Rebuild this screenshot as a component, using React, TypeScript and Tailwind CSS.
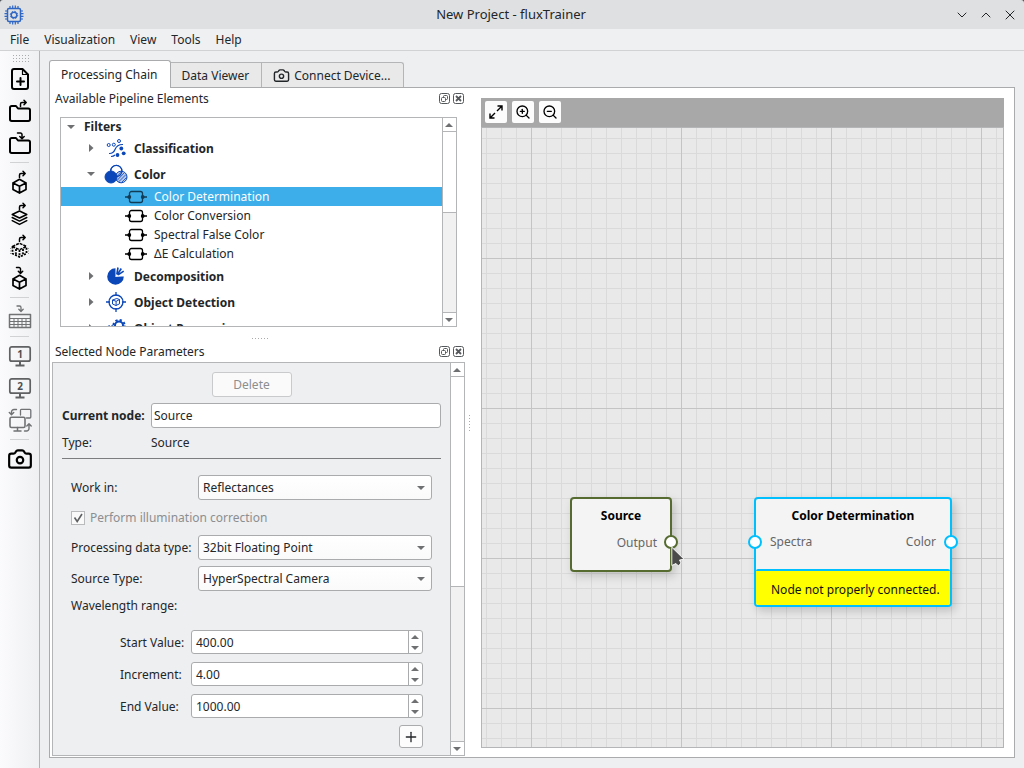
import { useState, type ReactNode } from "react";
import { Camera, ChevronDown, ChevronUp, Plus, X, ZoomIn, ZoomOut } from "lucide-react";

/* ---------- small shared parts ---------- */

const Dots = ({ cols, rows }: { cols: number; rows: number }) => (
  <svg width={cols * 3} height={rows * 3} fill="#a9abad" aria-hidden="true">
    {Array.from({ length: cols * rows }, (_, i) => (
      <rect key={i} x={(i % cols) * 3 + 1} y={Math.floor(i / cols) * 3 + 1} width="1" height="1" />
    ))}
  </svg>
);

const Triangle = ({ dir }: { dir: "up" | "down" | "right" }) => {
  if (dir === "right") {
    return (
      <svg width="5" height="8" viewBox="0 0 5 8" fill="#6e7072" aria-hidden="true">
        <path d="M0 0l4.5 4L0 8z" />
      </svg>
    );
  }
  return (
    <svg width="8" height="4" viewBox="0 0 8 4" fill="#6e7072" aria-hidden="true">
      <path d={dir === "up" ? "M0 4l4-4 4 4z" : "M0 0l4 4 4-4z"} />
    </svg>
  );
};

const ScrollBar = ({ thumb }: { thumb: string }) => (
  <div className="flex w-[14px] shrink-0 flex-col border-l border-[#b4b5b6] bg-[#f1f1f1]">
    <button aria-label="Scroll up" className="flex h-[14px] shrink-0 items-center justify-center border-b border-[#b4b5b6] bg-white pr-px">
      <Triangle dir="up" />
    </button>
    <div className="min-h-0 flex-1">
      <div className={`border-b border-[#b4b5b6] bg-white ${thumb}`} />
    </div>
    <button aria-label="Scroll down" className="flex h-[14px] shrink-0 items-center justify-center border-t border-[#b4b5b6] bg-white pr-px">
      <Triangle dir="down" />
    </button>
  </div>
);

const DockTitle = ({ title }: { title: string }) => (
  <div className="flex h-5 shrink-0 items-center pr-px pl-[5px]">
    <h2 className="flex-1">{title}</h2>
    <div className="flex gap-[3px]">
      <button aria-label={`Float ${title}`}>
        <svg width="11" height="11" viewBox="0 0 11 11" fill="none" stroke="#55585a">
          <rect x="0.5" y="0.5" width="10" height="10" rx="2" />
          <rect x="4.5" y="2.5" width="4" height="4" rx="1" />
          <rect x="2.5" y="4.5" width="4" height="4" rx="1" fill="#fff" />
        </svg>
      </button>
      <button aria-label={`Close ${title}`}>
        <svg width="11" height="11" viewBox="0 0 11 11" fill="none" stroke="#55585a">
          <rect x="0.5" y="0.5" width="10" height="10" rx="2" />
          <path d="M3 3l5 5M8 3L3 8" strokeWidth="1.8" />
        </svg>
      </button>
    </div>
  </div>
);

/* ---------- icons ---------- */

const ChipIcon = () => (
  <svg width="20" height="20" viewBox="0 0 20 20" fill="none" stroke="#2f66c4" aria-hidden="true">
    <rect x="3.5" y="3.5" width="13" height="13" rx="1.5" strokeWidth="1.5" />
    <circle cx="10" cy="10" r="2.8" strokeWidth="1.4" />
    <circle cx="10" cy="10" r="3.7" strokeWidth="1" strokeDasharray="1.45 1.45" />
    <path
      d="M6 1v2.5M8.7 .5v3M11.3 .5v3M14 1v2.5M6 16.5v2.5M8.7 16.5v3M11.3 16.5v3M14 16.5v2.5M1 6h2.5M.5 8.7h3M.5 11.3h3M1 14h2.5M16.5 6h2.5M16.5 8.7h3M16.5 11.3h3M16.5 14h2.5"
      strokeWidth="1.2"
    />
  </svg>
);

const ToolIcon = ({ children, color = "#000" }: { children: ReactNode; color?: string }) => (
  <svg
    width="24"
    height="24"
    viewBox="0 0 24 24"
    fill="none"
    stroke={color}
    strokeWidth="2"
    strokeLinecap="round"
    strokeLinejoin="round"
    aria-hidden="true"
  >
    {children}
  </svg>
);

const ArrowOut = () => <path d="M11.5 7.5V5A1.5 1.5 0 0 1 13 3.5h4M15 1.3l2.2 2.2L15 5.7" strokeWidth="1.5" />;
const ArrowIn = () => <path d="M8.5 1.5H11A1.5 1.5 0 0 1 12.5 3v4M10.3 5.3l2.2 2.2 2.2-2.2" strokeWidth="1.5" />;
const Cube = () => (
  <path d="M11.5 9.3l6.5 3.6v6.6l-6.5 3.6L5 19.500v-6.600zM5 12.900l6.500 3.400 6.500-3.400M11.500 16.300v6.800" strokeWidth="1.7" />
);
const Folder = () => (
  <path d="M2 20.300V8.700A1.700 1.700 0 0 1 3.700 7H8l2 2.500h10.300A1.700 1.700 0 0 1 22 11.200v9.100a1.700 1.700 0 0 1-1.700 1.700H3.700A1.700 1.700 0 0 1 2 20.300z" />
);

const Monitor = ({ label }: { label: string }) => (
  <ToolIcon color="#5f6163">
    <rect x="1.8" y="2.8" width="20.4" height="14.4" rx="2" strokeWidth="1.7" />
    <path d="M12 17.5V21M7.500 21.500h9" strokeLinecap="butt" />
    <text x="12" y="14" textAnchor="middle" fill="#4d4f51" stroke="none" fontSize="10" fontWeight="700">
      {label}
    </text>
  </ToolIcon>
);

const NodeIcon = ({ active }: { active?: boolean }) => (
  <svg width="22" height="14" viewBox="0 0 22 14" fill="none" stroke={active ? "#123c56" : "#000"} aria-hidden="true">
    <rect x="4.5" y="1.5" width="13" height="11" rx="2" strokeWidth="1.3" />
    <path d="M0 7h4M18 7h4" strokeWidth="1.5" />
    <g fill={active ? "#123c56" : "#000"} stroke="none">
      <circle cx="4.300" cy="7" r="1.900" />
      <circle cx="17.700" cy="7" r="1.900" />
    </g>
  </svg>
);

const blue = "#0b47b8";

const ClassificationIcon = () => (
  <svg width="20" height="20" viewBox="0 0 20 20" fill="none" stroke={blue} aria-hidden="true">
    <circle cx="2.7" cy="7" r="1.5" />
    <circle cx="7.8" cy="6.7" r="1.5" />
    <circle cx="13" cy="3" r="1.5" />
    <path d="M3 15.5c4 .2 5-1.500 6-4S12 6.300 17 6.500M5 18.500c1.500 0 3-.5 4-1.500" strokeWidth="1.2" />
    <g fill={blue} stroke="none">
      <circle cx="15.3" cy="10.5" r="1.9" />
      <circle cx="11.5" cy="17" r="1.9" />
      <circle cx="17.7" cy="15.3" r="1.9" />
    </g>
  </svg>
);

const ColorIcon = () => (
  <svg width="24" height="20" viewBox="0 0 24 20" fill="none" stroke={blue} aria-hidden="true">
    <circle cx="12.3" cy="7" r="5.6" fill="#fff" />
    <circle cx="17.2" cy="13" r="5.8" fill="#b9c9ec" />
    <path d="M13 16.500l7-7.500M14.500 18l7.500-7.500M12.500 13l5-5.300M17.500 18.500l5-5" strokeWidth=".8" />
    <circle cx="7" cy="13" r="6" fill={blue} />
    <circle cx="12.3" cy="7" r="5.6" strokeWidth="1.2" />
  </svg>
);

const DecompositionIcon = () => (
  <svg width="20" height="20" viewBox="0 0 20 20" fill="none" stroke={blue} aria-hidden="true">
    <path d="M9.5 10.5V2.200a8.300 8.300 0 1 0 8.300 8.300z" fill={blue} stroke="none" />
    <path d="M10.800 8.500l1.200-7M11.300 8.800l4-6.300M11.700 9.200l6-4" strokeWidth="1.6" />
    <path d="M9.500 10.500l8.500-1.300" stroke="#fff" strokeWidth=".8" />
  </svg>
);

const DetectionIcon = () => (
  <svg width="20" height="20" viewBox="0 0 20 20" fill="none" stroke={blue} strokeWidth="1.3" aria-hidden="true">
    <circle cx="10" cy="10" r="7" />
    <path d="M10 0v4M10 16v4M0 10h4M16 10h4" />
    <path d="M10.800 6.500l2.700 1v4.300l-3.500 1.700-3.500-1.500V8zM6.500 8l3.700 1.300 3.300-1.800M10.100 9.300v4.200" strokeWidth="1" strokeLinejoin="round" />
  </svg>
);

const ProcessingIcon = () => (
  <svg width="22" height="20" viewBox="0 0 22 20" fill="none" stroke={blue} aria-hidden="true">
    <circle cx="14" cy="7.5" r="4" strokeWidth="2" />
    <circle cx="14" cy="7.5" r="5.6" strokeWidth="2" strokeDasharray="2.2 2.2" />
    <circle cx="6" cy="12" r="3" strokeWidth="2" />
    <circle cx="6" cy="12" r="4.4" strokeWidth="1.5" strokeDasharray="1.7 1.75" />
  </svg>
);

/* ---------- left tool bar ---------- */

const toolGroups: { label: string; icon: ReactNode }[][] = [
  [
    {
      label: "New project",
      icon: (
        <ToolIcon>
          <path d="M14.500 2H6a2 2 0 0 0-2 2v16a2 2 0 0 0 2 2h12a2 2 0 0 0 2-2V7.500z" />
          <path d="M14.500 2.500v5H20" strokeWidth="1.2" />
          <path d="M12.500 11v7M9 14.500h7" />
        </ToolIcon>
      ),
    },
    {
      label: "Open project",
      icon: (
        <ToolIcon>
          <Folder />
          <path d="M12.500 7.500V5A1.500 1.500 0 0 1 14 3.500h4M16 1.300l2.200 2.200L16 5.700" strokeWidth="1.5" />
        </ToolIcon>
      ),
    },
    {
      label: "Save project",
      icon: (
        <ToolIcon>
          <Folder />
          <path d="M9.500 2h3A1.500 1.500 0 0 1 14 3.500V7M11.800 5.500L14 7.700l2.200-2.200" strokeWidth="1.5" />
        </ToolIcon>
      ),
    },
  ],
  [
    { label: "Export cube", icon: <ToolIcon><ArrowOut /><Cube /></ToolIcon> },
    {
      label: "Export layers",
      icon: (
        <ToolIcon>
          <ArrowOut />
          <path d="M11.500 9l7.300 3.500-7.300 3.500-7.300-3.500zM4.200 15.500l7.300 3.600 7.300-3.600M4.200 18.700l7.300 3.700 7.300-3.700" strokeWidth="1.5" />
        </ToolIcon>
      ),
    },
    {
      label: "Export preprocessed cube",
      icon: (
        <ToolIcon>
          <ArrowOut />
          <path d="M4.500 12.500l7-3.300 7 3.300-7 3.200z" strokeWidth="1.5" strokeDasharray="3 1" strokeLinecap="butt" />
          <path d="M4.500 12.500v7l7 3.500 7-3.500v-7M8 15v6M11.500 16v7M15 15v6" strokeDasharray="2 1.300" strokeLinecap="butt" strokeWidth="1.8" />
          <path d="M2.500 14v6M20.500 14v6M5.500 17.500l6 2.500 6-2.500" stroke="#999" strokeDasharray="1 1.500" strokeLinecap="butt" strokeWidth="1" />
        </ToolIcon>
      ),
    },
    { label: "Import cube", icon: <ToolIcon><ArrowIn /><Cube /></ToolIcon> },
  ],
  [
    {
      label: "Import table",
      icon: (
        <ToolIcon color="#707274">
          <path d="M9 1h2.500A1.500 1.500 0 0 1 13 2.500V6M10.800 4.300L13 6.500l2.200-2.200" strokeWidth="1.3" />
          <path d="M1.500 9.500h21v13h-21z" strokeWidth="1.5" />
          <path d="M1.500 13.500h21M1.500 16.500h21M1.500 19.500h21M6 13.500v9M10 13.500v9M14 13.500v9M18 13.500v9" strokeWidth="1" />
        </ToolIcon>
      ),
    },
  ],
  [
    { label: "Preview 1", icon: <Monitor label="1" /> },
    { label: "Preview 2", icon: <Monitor label="2" /> },
    {
      label: "Swap previews",
      icon: (
        <ToolIcon color="#707274">
          <path d="M12.500 7V2.500A1 1 0 0 1 13.500 1.300h8.300a1 1 0 0 1 1 1V9a1 1 0 0 1-1 1H18.500" strokeWidth="1.3" />
          <rect x="2" y="9.3" width="15" height="10.2" rx="1.5" strokeWidth="1.6" />
          <path d="M9.500 19.500V23M6 23h7" strokeWidth="1.5" />
          <path d="M8.500 1.500H6A2.500 2.500 0 0 0 3.500 4v2.500M1.300 4.500l2.200 2.200 2.200-2.200M16.500 23h2a2.500 2.500 0 0 0 2.500-2.500V16M18.800 18L21 15.800l2.200 2.200" strokeWidth="1.4" />
        </ToolIcon>
      ),
    },
  ],
  [{ label: "Camera", icon: <Camera size={26} color="#000" aria-hidden="true" /> }],
];

const ToolBar = () => (
  <aside className="flex w-10 shrink-0 flex-col border-r border-[#b1b3b5] bg-linear-to-r from-[#fbfbfd] to-[#eff0f1]">
    <div className="flex h-3 shrink-0 items-center justify-center pt-[2px] pl-[2px]">
      <Dots cols={6} rows={3} />
    </div>
    {toolGroups.map((group, i) => (
      <div key={i} className="flex flex-col">
        {i > 0 && (
          <div className="flex h-[7px] items-center px-[10px]">
            <div className="h-px flex-1 bg-[#d0d2d4]" />
          </div>
        )}
        {group.map((tool) => (
          <button key={tool.label} aria-label={tool.label} className="flex h-8 items-center justify-center">
            {tool.icon}
          </button>
        ))}
      </div>
    ))}
  </aside>
);

/* ---------- pipeline element tree ---------- */

const colorFilters = ["Color Determination", "Color Conversion", "Spectral False Color", "ΔE Calculation"];

const Category = ({ name, icon, open }: { name: string; icon: ReactNode; open?: boolean }) => (
  <li className="flex h-[26px] items-center pl-[26px] font-bold">
    <span className="mr-2 flex w-2 justify-center">
      <Triangle dir={open ? "down" : "right"} />
    </span>
    <span className="flex w-[26px] justify-center">{icon}</span>
    <span className="pl-[5px]">{name}</span>
  </li>
);

const ElementTree = () => {
  const [selected, setSelected] = useState(colorFilters[0]);

  return (
    <div className="mt-[9px] mr-2 ml-[10px] flex h-[210px] shrink-0 border border-[#b4b5b6] bg-white">
      <ul className="min-w-0 flex-1 overflow-hidden">
        <li className="flex h-[17px] items-center pl-[6px] font-bold">
          <span className="w-[17px]">
            <Triangle dir="down" />
          </span>
          Filters
        </li>
        <Category name="Classification" icon={<ClassificationIcon />} />
        <Category name="Color" icon={<ColorIcon />} open />
        {colorFilters.map((name) => (
          <li key={name}>
            <button
              onClick={() => setSelected(name)}
              className={`flex h-[19px] w-full items-center gap-[7px] pl-16 ${
                selected === name ? "bg-[#3daee9] text-[#fcfcfc]" : ""
              }`}
            >
              <NodeIcon active={selected === name} />
              {name}
            </button>
          </li>
        ))}
        <Category name="Decomposition" icon={<DecompositionIcon />} />
        <Category name="Object Detection" icon={<DetectionIcon />} />
        <Category name="Object Processing" icon={<ProcessingIcon />} />
      </ul>
      <ScrollBar thumb="h-[81px]" />
    </div>
  );
};

/* ---------- node parameters ---------- */

const field = "rounded-[3px] border border-[#a9abad]";

const SelectRow = ({ id, label, options }: { id: string; label: string; options: string[] }) => (
  <div className="grid grid-cols-[127px_1fr] items-center">
    <label htmlFor={id}>{label}</label>
    <div className="relative">
      <select id={id} className={`block h-[25px] w-full appearance-none bg-linear-to-b from-white to-[#fafafa] pl-1 ${field}`}>
        {options.map((option) => (
          <option key={option}>{option}</option>
        ))}
      </select>
      <span className="pointer-events-none absolute inset-y-0 right-[7px] flex items-center">
        <Triangle dir="down" />
      </span>
    </div>
  </div>
);

const SpinRow = ({ id, label, initial, step }: { id: string; label: string; initial: number; step: number }) => {
  const [value, setValue] = useState(initial.toFixed(2));
  const change = (diff: number) => setValue((Number(value) + diff).toFixed(2));

  return (
    <div className="grid grid-cols-[71px_1fr] items-center">
      <label htmlFor={id}>{label}</label>
      <div className={`flex h-6 bg-white ${field}`}>
        <input
          id={id}
          value={value}
          onChange={(e) => setValue(e.target.value)}
          className="min-w-0 flex-1 bg-transparent pl-1 outline-none"
        />
        <div className="flex w-[14px] flex-col border-l border-[#a9abad]">
          <button type="button" aria-label={`Increase ${label}`} onClick={() => change(step)} className="flex flex-1 items-center justify-center pr-px">
            <Triangle dir="up" />
          </button>
          <button type="button" aria-label={`Decrease ${label}`} onClick={() => change(-step)} className="flex flex-1 items-center justify-center pr-px">
            <Triangle dir="down" />
          </button>
        </div>
      </div>
    </div>
  );
};

const NodeParameters = () => {
  const [name, setName] = useState("Source");

  return (
    <div className="mt-px ml-[2px] flex min-h-0 flex-1 border border-[#b4b5b6] bg-[#eeeff1]">
      <form className="min-w-0 flex-1 overflow-hidden px-[9px] pt-[9px]" onSubmit={(e) => e.preventDefault()}>
        <button
          type="button"
          disabled
          className="mx-auto block h-[25px] w-20 rounded-[3px] border border-[#c9cacc] bg-[#fafafa] text-[#8c8e90]"
        >
          Delete
        </button>
        <div className="mt-[6px] grid grid-cols-[89px_1fr] items-center gap-y-[5px]">
          <label htmlFor="node-name" className="font-bold whitespace-nowrap">
            Current node:
          </label>
          <input
            id="node-name"
            value={name}
            onChange={(e) => setName(e.target.value)}
            className={`h-[25px] min-w-0 bg-white pl-[2px] outline-none ${field}`}
          />
          <span>Type:</span>
          <span>Source</span>
        </div>
        <hr className="mt-[6px] border-[#7b7d7f]" />
        <div className="px-[9px] pt-4">
          <SelectRow id="work-in" label="Work in:" options={["Reflectances", "Intensities", "Absorbances"]} />
          <div className="my-[10px] flex h-[15px] items-center gap-[5px] text-[#8c8e90]">
            <span className="relative flex">
              <input
                id="illumination"
                type="checkbox"
                defaultChecked
                disabled
                className="size-[14px] appearance-none border border-[#b9bbbd] bg-[#fafafa]"
              />
              <svg className="pointer-events-none absolute inset-0" width="14" height="14" viewBox="0 0 14 14" fill="none" stroke="#5e6062" strokeWidth="1.6">
                <path d="M3.500 6.500l2.700 4L11 3" />
              </svg>
            </span>
            <label htmlFor="illumination">Perform illumination correction</label>
          </div>
          <div className="flex flex-col gap-[6px]">
            <SelectRow id="data-type" label="Processing data type:" options={["32bit Floating Point", "64bit Floating Point"]} />
            <SelectRow id="source-type" label="Source Type:" options={["HyperSpectral Camera", "Line Spectrometer"]} />
          </div>
          <p className="mt-[5px]">Wavelength range:</p>
          <div className="mt-[15px] flex flex-col gap-2 pr-[9px] pl-[49px]">
            <SpinRow id="start" label="Start Value:" initial={400} step={1} />
            <SpinRow id="increment" label="Increment:" initial={4} step={0.1} />
            <SpinRow id="end" label="End Value:" initial={1000} step={1} />
          </div>
          <div className="mt-[7px] flex justify-end pr-[9px]">
            <button type="button" aria-label="Add range" className={`flex h-[23px] w-6 items-center justify-center bg-[#fcfcfc] ${field}`}>
              <Plus size={16} strokeWidth={2} color="#232629" />
            </button>
          </div>
        </div>
      </form>
      <ScrollBar thumb="h-[210px]" />
    </div>
  );
};

/* ---------- node canvas ---------- */

const CanvasButton = ({ label, children }: { label: string; children: ReactNode }) => (
  <button aria-label={label} className="flex size-[22px] items-center justify-center rounded-[2px] bg-[#fcfcfc] text-black">
    {children}
  </button>
);

const NodeCanvas = () => (
  <section className="flex min-w-0 flex-1 flex-col pt-[10px] pr-[10px] pb-[9px]">
    <div className="flex h-[29px] shrink-0 items-center gap-[5px] bg-[#a8a8a8] px-1 pb-px">
      <CanvasButton label="Fit to view">
        <svg width="14" height="14" viewBox="0 0 14 14" fill="none" stroke="#000" strokeWidth="1.4" aria-hidden="true">
          <path d="M8.500 1H13v4.500M13 1L8 6M5.500 13H1V8.500M1 13l5-5" />
        </svg>
      </CanvasButton>
      <CanvasButton label="Zoom in">
        <ZoomIn size={16} strokeWidth={2} />
      </CanvasButton>
      <CanvasButton label="Zoom out">
        <ZoomOut size={16} strokeWidth={2} />
      </CanvasButton>
    </div>
    <div className="relative flex-1 overflow-hidden border border-[#b4b5b6] bg-[#e9e9e9] bg-[linear-gradient(to_right,#c4c4c4_1px,transparent_1px),linear-gradient(to_bottom,#c4c4c4_1px,transparent_1px),linear-gradient(to_right,#dadada_1px,transparent_1px),linear-gradient(to_bottom,#dadada_1px,transparent_1px)] [background-position:49px_130px,49px_130px,4px_10px,4px_10px] [background-size:150px_150px,150px_150px,15px_15px,15px_15px]">
      <div className="absolute top-[369px] left-[88px] h-[75px] w-[102px] rounded-[4px] border-2 border-[#556b2f] bg-[#f4f4f4] pt-[7px] shadow-[3px_4px_10px_rgba(0,0,0,0.18)]">
        <h3 className="text-center font-bold text-black">Source</h3>
        <p className="mt-2 pr-[13px] text-right text-[#666]">Output</p>
        <span className="absolute top-[36px] -right-[8px] size-[14px] rounded-full border-2 border-[#556b2f] bg-white" />
      </div>
      <div className="absolute top-[369px] left-[272px] h-[110px] w-[198px] rounded-[4px] border-2 border-[#00bfff] bg-[#f4f4f4] pt-[7px] shadow-[3px_4px_10px_rgba(0,0,0,0.18)]">
        <h3 className="text-center font-bold text-black">Color Determination</h3>
        <div className="mt-[7px] flex justify-between px-[14px] text-[#666]">
          <span>Spectra</span>
          <span>Color</span>
        </div>
        <p className="absolute inset-x-0 bottom-0 h-[36px] rounded-[2px] border-t-2 border-[#00bfff] bg-[#ff0] pt-[9px] pl-[15px] whitespace-nowrap text-[#111]">
          Node not properly connected.
        </p>
        <span className="absolute top-[36px] -left-[8px] size-[14px] rounded-full border-2 border-[#00bfff] bg-white" />
        <span className="absolute top-[36px] -right-[8px] size-[14px] rounded-full border-2 border-[#00bfff] bg-white" />
      </div>
      <svg className="pointer-events-none absolute top-[418px] left-[189px]" width="14" height="22" viewBox="0 0 14 22" aria-hidden="true">
        <path d="M.8 1.200V19.500l4.200-2 2.500 2.500 2.500-3-1.500-3 4.500-.8z" fill="#4a4a4a" stroke="#fff" strokeWidth=".9" />
      </svg>
    </div>
  </section>
);

/* ---------- window ---------- */

const App = () => {
  return (
    <div className="flex h-screen min-h-[768px] flex-col bg-[#4a4d50] font-['Noto_Sans',sans-serif] text-xs leading-[19px] text-[#232629]">
      <header className="flex h-[29px] shrink-0 items-center rounded-t-[3px] bg-[#dee0e2] px-1">
        <div className="flex flex-1">
          <ChipIcon />
        </div>
        <h1 className="text-[13px]">New Project - fluxTrainer</h1>
        <div className="flex flex-1 justify-end gap-2 pr-[2px]">
          <button aria-label="Minimize"><ChevronDown size={16} strokeWidth={1.5} /></button>
          <button aria-label="Maximize"><ChevronUp size={16} strokeWidth={1.5} /></button>
          <button aria-label="Close"><X size={16} strokeWidth={1.5} /></button>
        </div>
      </header>
      <nav className="flex h-[22px] shrink-0 items-center gap-[15px] border-b border-[#d0d2d4] bg-[#eff0f1] pl-[10px]">
        {["File", "Visualization", "View", "Tools", "Help"].map((item) => (
          <button key={item}>{item}</button>
        ))}
      </nav>
      <div className="flex min-h-0 flex-1 bg-[#eeeff1]">
        <ToolBar />
        <main className="flex min-w-0 flex-1 flex-col px-[9px] pt-[9px] pb-[10px]">
          <div role="tablist" className="relative -mb-px flex shrink-0 items-end">
            <button role="tab" aria-selected="true" className="h-7 rounded-t-[3px] border border-b-0 border-[#a9abad] bg-white pr-3 pl-[11px]">
              Processing Chain
            </button>
            <button role="tab" aria-selected="false" className="mb-px h-[25px] border-t border-r border-[#b4b5b6] bg-[#e9e9ea] pr-3 pl-[11px]">
              Data Viewer
            </button>
            <button
              role="tab"
              aria-selected="false"
              className="mb-px flex h-[25px] items-center gap-1 rounded-tr-[3px] border-t border-r border-[#b4b5b6] bg-[#e9e9ea] pr-3 pl-[11px]"
            >
              <Camera size={17} strokeWidth={2} />
              Connect Device...
            </button>
          </div>
          <div className="flex min-h-0 flex-1 border border-[#a9abad] bg-white">
            <div className="flex w-[415px] shrink-0 flex-col pb-px">
              <DockTitle title="Available Pipeline Elements" />
              <ElementTree />
              <div className="flex h-[14px] shrink-0 items-end justify-center pb-px pl-1">
                <Dots cols={6} rows={1} />
              </div>
              <DockTitle title="Selected Node Parameters" />
              <NodeParameters />
            </div>
            <div className="flex w-4 shrink-0 items-center pl-[3px]">
              <Dots cols={1} rows={6} />
            </div>
            <NodeCanvas />
          </div>
        </main>
      </div>
    </div>
  );
};

export default App;
